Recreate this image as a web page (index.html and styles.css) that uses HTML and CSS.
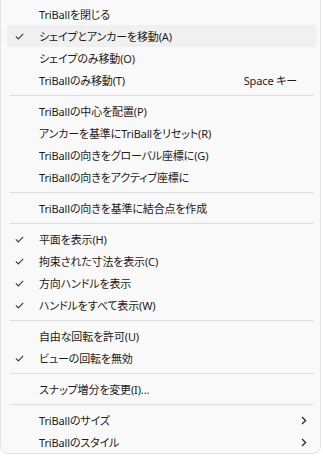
FILE: index.html
```html
<!DOCTYPE html>
<html lang="ja">
  <head>
    <meta charset="UTF-8" />
    <meta name="viewport" content="width=device-width, initial-scale=1.0" />
    <title>TriBall Menu</title>
    <link rel="stylesheet" href="styles.css">
  </head>
  <body>
    <div class="menu">
      <div class="item"><span class="check"></span><span class="label">TriBallを閉じる</span></div>
      <div class="item hover">
        <span class="check"><svg width="9" height="7" viewBox="0 0 9 7"><path d="M0.8 3.4 L3.3 5.9 L8.2 0.8" /></svg></span>
        <span class="label">シェイプとアンカーを移動(A)</span>
      </div>
      <div class="item"><span class="check"></span><span class="label">シェイプのみ移動(O)</span></div>
      <div class="item"><span class="check"></span><span class="label">TriBallのみ移動(T)</span><span class="shortcut">Space キー</span></div>

      <div class="sep"></div>

      <div class="item"><span class="check"></span><span class="label">TriBallの中心を配置(P)</span></div>
      <div class="item"><span class="check"></span><span class="label">アンカーを基準にTriBallをリセット(R)</span></div>
      <div class="item"><span class="check"></span><span class="label">TriBallの向きをグローバル座標に(G)</span></div>
      <div class="item"><span class="check"></span><span class="label">TriBallの向きをアクティブ座標に</span></div>

      <div class="sep"></div>

      <div class="item"><span class="check"></span><span class="label">TriBallの向きを基準に結合点を作成</span></div>

      <div class="sep"></div>

      <div class="item">
        <span class="check"><svg width="9" height="7" viewBox="0 0 9 7"><path d="M0.8 3.4 L3.3 5.9 L8.2 0.8" /></svg></span>
        <span class="label">平面を表示(H)</span>
      </div>
      <div class="item">
        <span class="check"><svg width="9" height="7" viewBox="0 0 9 7"><path d="M0.8 3.4 L3.3 5.9 L8.2 0.8" /></svg></span>
        <span class="label">拘束された寸法を表示(C)</span>
      </div>
      <div class="item">
        <span class="check"><svg width="9" height="7" viewBox="0 0 9 7"><path d="M0.8 3.4 L3.3 5.9 L8.2 0.8" /></svg></span>
        <span class="label">方向ハンドルを表示</span>
      </div>
      <div class="item">
        <span class="check"><svg width="9" height="7" viewBox="0 0 9 7"><path d="M0.8 3.4 L3.3 5.9 L8.2 0.8" /></svg></span>
        <span class="label">ハンドルをすべて表示(W)</span>
      </div>

      <div class="sep"></div>

      <div class="item"><span class="check"></span><span class="label">自由な回転を許可(U)</span></div>
      <div class="item">
        <span class="check"><svg width="9" height="7" viewBox="0 0 9 7"><path d="M0.8 3.4 L3.3 5.9 L8.2 0.8" /></svg></span>
        <span class="label">ビューの回転を無効</span>
      </div>

      <div class="sep"></div>

      <div class="item"><span class="check"></span><span class="label">スナップ増分を変更(I)...</span></div>

      <div class="sep"></div>

      <div class="item">
        <span class="check"></span><span class="label">TriBallのサイズ</span>
        <svg class="chevron" width="6" height="9" viewBox="0 0 6 9"><path d="M1 1 L4.6 4.5 L1 8" /></svg>
      </div>
      <div class="item">
        <span class="check"></span><span class="label">TriBallのスタイル</span>
        <svg class="chevron" width="6" height="9" viewBox="0 0 6 9"><path d="M1 1 L4.6 4.5 L1 8" /></svg>
      </div>
    </div>
  </body>
</html>
```

FILE: styles.css
```css
* {
  box-sizing: border-box;
}
body {
  margin: 0;
  background-color: #ffffff;
  font-family: "Noto Sans", "Noto Sans CJK JP", sans-serif;
  font-size: 11px;
  font-feature-settings: "palt";
  letter-spacing: -0.15px;
  color: #1b1b1b;
}
.menu {
  width: 321px;
  background-color: #f9f9f9;
  border: 1px solid #e3e3e3;
  border-top: none;
  border-radius: 0 0 8px 8px;
  padding: 3px 0 0 0;
}
.item {
  display: flex;
  align-items: center;
  height: 22px;
  margin: 0 3px 0 6px;
  padding-right: 10px;
  border-radius: 4px;
}
.item.hover {
  background-color: #f0f0f0;
}
.check {
  display: flex;
  align-items: center;
  width: 32px;
  height: 22px;
  padding-left: 8px;
  flex-shrink: 0;
}
.check path {
  fill: none;
  stroke: #3a3a3a;
  stroke-width: 1.1;
}
.label {
  flex: 1;
  white-space: nowrap;
}
.shortcut {
  margin-right: 10px;
  white-space: nowrap;
}
.chevron path {
  fill: none;
  stroke: #2a2a2a;
  stroke-width: 1.3;
}
.sep {
  height: 1px;
  margin: 4px 6px 4px 9px;
  background-color: #dedede;
}
```
